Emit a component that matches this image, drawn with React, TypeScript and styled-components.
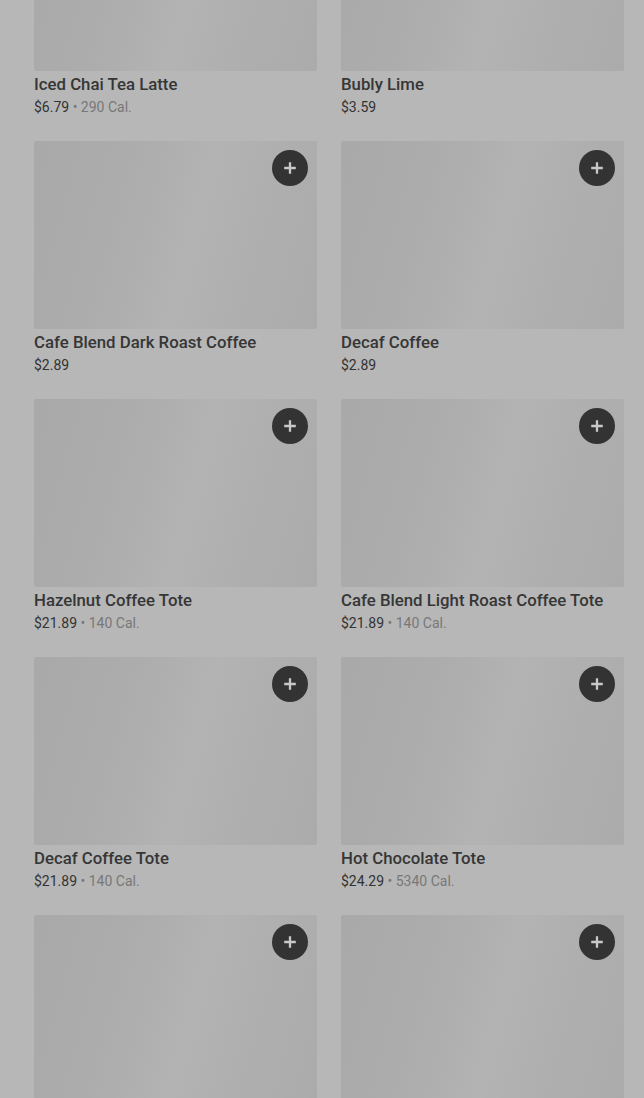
import React from "react";
import styled, { createGlobalStyle } from "styled-components";

const Global = createGlobalStyle`
  html, body { margin: 0; padding: 0; background: #b7b7b7; overflow: hidden; }
  body { font-family: Roboto, "Liberation Sans", Arial, sans-serif; }
`;

const Page = styled.div`
  width: 644px;
  height: 1098px;
  overflow: hidden;
  background: #b7b7b7;
`;

const Grid = styled.div`
  display: grid;
  grid-template-columns: 283px 283px;
  column-gap: 24px;
  row-gap: 24px;
  padding: 0 20px 0 34px;
  margin-top: -117px;
`;

const Card = styled.div`
  display: flex;
  flex-direction: column;
`;

const Thumb = styled.div`
  position: relative;
  height: 188px;
  border-radius: 2px;
  background: linear-gradient(105deg, #a9a9a9 0%, #acacac 30%, #b3b3b3 55%, #aeaeae 80%, #ababab 100%);
`;

const AddButton = styled.button`
  position: absolute;
  top: 9px;
  right: 9px;
  width: 36px;
  height: 36px;
  border-radius: 50%;
  border: none;
  padding: 0;
  background: #333333;
  display: flex;
  align-items: center;
  justify-content: center;
`;

const Name = styled.div`
  margin-top: 1px;
  font-size: 16.8px;
  line-height: 24px;
  font-weight: 500;
  color: #363636;
  white-space: nowrap;
`;

const Meta = styled.div`
  margin-top: 1px;
  font-size: 14px;
  line-height: 20px;
  color: #333333;
  white-space: nowrap;
`;

const Cal = styled.span`
  color: #787878;
`;

type Item = { name?: string; price?: string; cal?: string };

const items: Item[] = [
  { name: "Iced Chai Tea Latte", price: "$6.79", cal: "290 Cal." },
  { name: "Bubly Lime", price: "$3.59" },
  { name: "Cafe Blend Dark Roast Coffee", price: "$2.89" },
  { name: "Decaf Coffee", price: "$2.89" },
  { name: "Hazelnut Coffee Tote", price: "$21.89", cal: "140 Cal." },
  { name: "Cafe Blend Light Roast Coffee Tote", price: "$21.89", cal: "140 Cal." },
  { name: "Decaf Coffee Tote", price: "$21.89", cal: "140 Cal." },
  { name: "Hot Chocolate Tote", price: "$24.29", cal: "5340 Cal." },
  {},
  {},
];

const Plus = () => (
  <svg width="14" height="14" viewBox="0 0 14 14" aria-hidden="true">
    <path d="M7 1.2v11.6M1.2 7h11.6" stroke="#c9c9c9" strokeWidth="2.3" strokeLinecap="butt" />
  </svg>
);

export default function App() {
  return (
    <Page>
      <Global />
      <Grid>
        {items.map((it, i) => (
          <Card key={i}>
            <Thumb>
              <AddButton aria-label="Add">
                <Plus />
              </AddButton>
            </Thumb>
            {it.name && <Name>{it.name}</Name>}
            {it.price && (
              <Meta>
                {it.price}
                {it.cal && <Cal> • {it.cal}</Cal>}
              </Meta>
            )}
          </Card>
        ))}
      </Grid>
    </Page>
  );
}
